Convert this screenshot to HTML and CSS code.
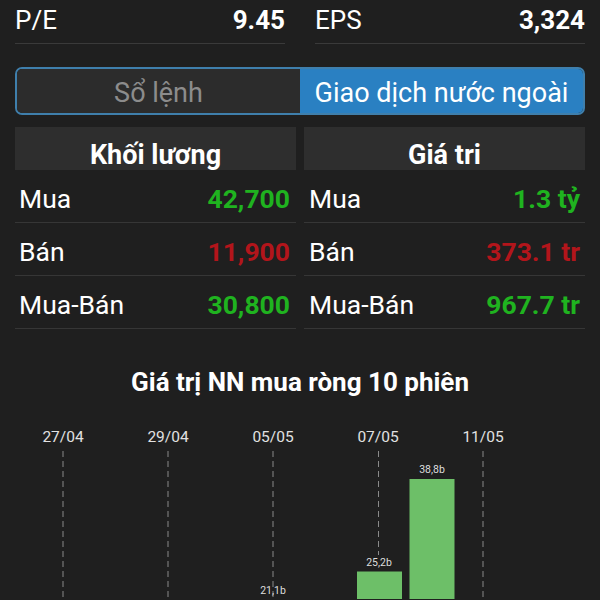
FILE: index.html
```html
<!DOCTYPE html>
<html lang="vi">
<head>
    <meta charset="UTF-8">
    <meta name="viewport" content="width=device-width, initial-scale=1.0">
    <title>Giao dịch nước ngoài</title>
    <link rel="stylesheet" href="styles.css">
</head>
<body>
    <div class="stats">
        <div class="stat"><span>P/E</span><b>9.45</b></div>
        <div class="stat"><span>EPS</span><b>3,324</b></div>
    </div>

    <div class="tabs">
        <div class="tab">Sổ lệnh</div>
        <div class="tab active">Giao dịch nước ngoài</div>
    </div>

    <div class="tables">
        <div class="panel left">
            <div class="panel-head">Khối lương</div>
            <div class="row"><span>Mua</span><b class="up">42,700</b></div>
            <div class="row"><span>Bán</span><b class="down">11,900</b></div>
            <div class="row"><span>Mua-Bán</span><b class="up">30,800</b></div>
        </div>
        <div class="panel right">
            <div class="panel-head">Giá tri</div>
            <div class="row"><span>Mua</span><b class="up">1.3 tỷ</b></div>
            <div class="row"><span>Bán</span><b class="down">373.1 tr</b></div>
            <div class="row"><span>Mua-Bán</span><b class="up">967.7 tr</b></div>
        </div>
    </div>

    <h2 class="chart-title">Giá trị NN mua ròng 10 phiên</h2>

    <!-- net foreign buy chart -->
    <svg class="chart" width="600" height="200" viewBox="0 0 600 200">
        <g class="dates">
            <text x="63" y="43">27/04</text>
            <text x="168" y="43">29/04</text>
            <text x="273" y="43">05/05</text>
            <text x="378" y="43">07/05</text>
            <text x="483" y="43">11/05</text>
        </g>
        <g class="grid">
            <line x1="63" y1="52" x2="63" y2="200" />
            <line x1="168" y1="52" x2="168" y2="200" />
            <line x1="273" y1="52" x2="273" y2="200" />
            <line x1="378.5" y1="52" x2="378.5" y2="156" />
            <line x1="483" y1="52" x2="483" y2="200" />
        </g>
        <g class="bars">
            <rect x="357" y="172.5" width="45" height="40" />
            <rect x="409.5" y="80" width="45" height="130" />
        </g>
        <g class="values">
            <text x="273" y="195">21,1b</text>
            <text x="379" y="167">25,2b</text>
            <text x="432" y="74">38,8b</text>
        </g>
    </svg>
</body>
</html>
```

FILE: styles.css
```css
html, body {
    overflow: hidden;
}
body {
    margin: 0;
    padding: 0 15px;
    background: #1f1f1f;
    color: #ffffff;
    font-family: Roboto, "Noto Sans", sans-serif;
}
.stats {
    display: grid;
    grid-template-columns: 1fr 1fr;
    column-gap: 30px;
}
.stat {
    display: flex;
    justify-content: space-between;
    align-items: center;
    height: 44px;
    border-bottom: 1px solid #3a3a3a;
    font-size: 26px;
    padding-bottom: 3px;
    box-sizing: border-box;
}
.stat b {
    font-weight: bold;
}
.tabs {
    display: flex;
    margin-top: 23px;
    height: 48px;
    border: 2px solid #3f7fac;
    border-radius: 7px;
    overflow: hidden;
    box-sizing: border-box;
}
.tab {
    flex: 1;
    display: flex;
    align-items: center;
    justify-content: center;
    padding-top: 3px;
    font-size: 27px;
    background: #2c2c2c;
    color: #8c8c8c;
}
.tab.active {
    background: #2a80c2;
    color: #ffffff;
}
.tables {
    display: grid;
    grid-template-columns: 1fr 1fr;
    column-gap: 8px;
    margin-top: 12px;
}
.panel-head {
    height: 43px;
    padding-top: 15px;
    box-sizing: border-box;
    overflow: hidden;
    background: #2e2e2e;
    font-size: 27px;
    line-height: 1;
    font-weight: bold;
    text-align: center;
}
.row {
    display: flex;
    justify-content: space-between;
    align-items: center;
    height: 53px;
    border-bottom: 1px solid #363636;
    font-size: 26.5px;
    padding: 5px 6px 0 4px;
    box-sizing: border-box;
}
.right .row {
    padding: 5px 5px 0;
}
.row b {
    font-weight: bold;
}
.up {
    color: #1fb31f;
}
.down {
    color: #b3151b;
}
.chart-title {
    margin: 38px 0 2px;
    font-size: 26px;
    line-height: 30px;
    text-align: center;
}
.chart {
    display: block;
    margin: 0 -15px;
}
.dates text {
    fill: #e2e2e2;
    font-size: 15.5px;
    text-anchor: middle;
}
.grid line {
    stroke: #8a8a8a;
    stroke-width: 1;
    stroke-dasharray: 6 4;
}
.bars rect {
    fill: #6dbf68;
}
.values text {
    fill: #dddddd;
    font-size: 10.5px;
    text-anchor: middle;
}
```
